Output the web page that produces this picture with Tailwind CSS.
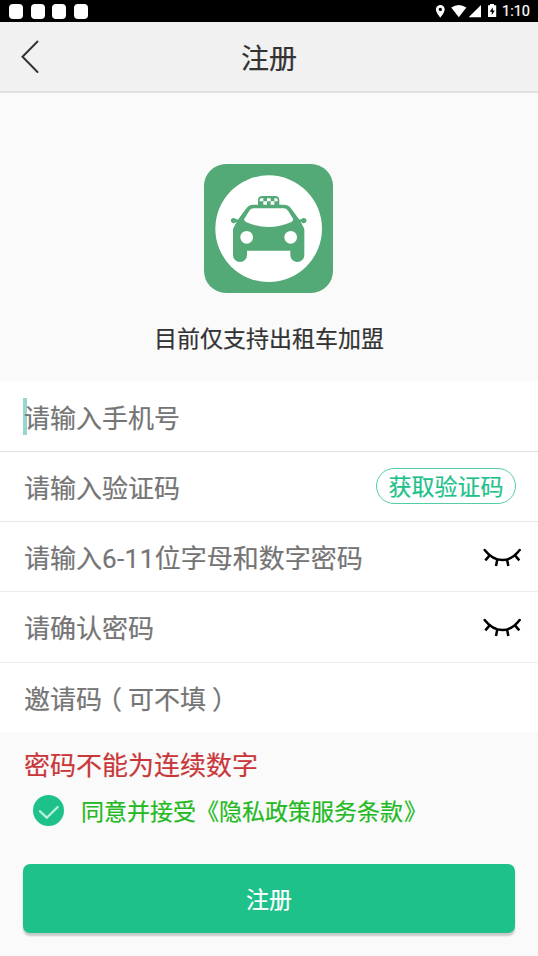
<!DOCTYPE html>
<html lang="zh-CN">
<head>
<meta charset="utf-8">
<title>注册</title>
<script src="https://cdn.jsdelivr.net/npm/@tailwindcss/browser@4"></script>
</head>
<body class="w-[538px] h-[956px] overflow-hidden flex flex-col bg-[#fafafa] font-[Roboto,'Noto_Sans_CJK_SC',sans-serif] text-[23px] text-[#333] [-webkit-text-stroke:0.2px]">
  <div class="h-[22px] shrink-0 bg-black flex items-center justify-between pl-[9px] pr-2">
    <div class="flex gap-[7.5px]">
      <i class="w-[14px] h-[15px] rounded-[4px] bg-white"></i>
      <i class="w-[14px] h-[15px] rounded-[4px] bg-white"></i>
      <i class="w-[14px] h-[15px] rounded-[4px] bg-white"></i>
      <i class="w-[14px] h-[15px] rounded-[4px] bg-white"></i>
    </div>
    <div class="flex items-center text-white">
      <svg class="w-[62px] h-[22px] overflow-visible" viewBox="1 0 62 22" fill="#fff">
        <path fill-rule="evenodd" d="M4.3 5a4.4 4.4 0 0 0-4.4 4.4c0 3.1 4.4 8.1 4.4 8.1s4.4-5 4.4-8.1A4.4 4.4 0 0 0 4.3 5zm0 2.7a1.7 1.7 0 1 1 0 3.4 1.7 1.7 0 0 1 0-3.4z"/>
        <path d="M15.2 7.6Q22.8 2.4 30.4 7.6L22.8 17.2z"/>
        <path d="M45 5v12.3H32.7z"/>
        <path fill-rule="evenodd" d="M52 5.3h2V4h4v1.3h2.2v11.6H52zM56.8 7.2l-3 4.5h2v3.2l3-4.5h-2z"/>
      </svg>
      <span class="text-[14.5px] leading-[22px] ml-[3px] relative top-px">1:10</span>
    </div>
  </div>
  <header class="h-[71px] shrink-0 bg-[#f1f1f1] border-b-2 border-[#e1e1e1] grid grid-cols-[60px_1fr_60px] items-center">
    <svg class="w-5 h-9 ml-[20px]" viewBox="0 0 20 36" fill="none" stroke="#333" stroke-width="2" stroke-linecap="round"><path d="M17.5 2.5L2.5 17.7L17.5 33"/></svg>
    <h1 class="text-center text-[28px] leading-[40px] pt-[6px]">注册</h1>
  </header>
  <section class="h-[288px] shrink-0 pt-[71px] flex flex-col items-center">
    <svg class="w-[129px] h-[129px] shrink-0 mr-px" viewBox="42 42 387 387">
      <rect x="42" y="42" width="387" height="387" rx="66" fill="#53aa77"/>
      <circle cx="236" cy="236" r="160" fill="#fff"/>
      <g fill="#53aa77">
        <path d="M204 164V151Q204 138 217 138H255Q268 138 268 151V164H282Q296 164 304 176L331 213 343 237V315A21 21 0 0 1 301 315V302H171V315A21 21 0 0 1 129 315V237L141 213 168 176Q176 164 190 164z"/>
        <path d="M146 218L138 215A8 8 0 1 1 137 207L150 211zM326 218L334 215A8 8 0 1 0 335 207L322 211z"/>
      </g>
      <g fill="#fff">
        <path d="M191 175H281Q289 175 294 182L309 206Q311 212 304 216Q270 231 236 231Q202 231 168 216Q161 212 163 206L178 182Q183 175 191 175z"/>
        <circle cx="170" cy="262" r="19"/><circle cx="302" cy="262" r="19"/>
        <path d="M209 154V150Q209 145 214 145H220V154zM231 145H242V154H231zM253 145H258Q263 145 263 150V154H253zM220 154H231V164H220zM242 154H253V164H242z"/>
      </g>
    </svg>
    <p class="mt-[30px] leading-[34px]">目前仅支持出租车加盟</p>
  </section>
  <form class="h-[351px] shrink-0 bg-white grid grid-rows-[71px_70px_70px_71px_69px] text-[26px] text-[#757575] leading-[38px]">
    <div class="border-b border-[#e2e2e2] px-6 flex items-center relative"><i class="absolute left-[23px] top-[17px] w-1 h-[37px] bg-[#97d5cf]"></i><span class="relative pt-[5px]">请输入手机号</span></div>
    <div class="border-b border-[#e6e6e6] pl-6 pr-[22px] flex items-center justify-between"><span class="pt-1">请输入验证码</span><button type="button" class="w-[140px] h-[36px] mb-px rounded-full border border-[#55cda6] text-[#1fc18b] text-[23px] leading-[34px] pt-[2px]">获取验证码</button></div>
    <div class="border-b border-[#ececec] pl-6 pr-4 flex items-center justify-between"><span class="pt-1">请输入<span class="tracking-[0.4px]">6-11</span>位字母和数字密码</span>
      <svg class="w-[39px] h-[19px] mt-px" viewBox="369 294 117 57" fill="none" stroke="#000" stroke-width="7.5" stroke-linecap="round"><path d="M374 300Q397 330 427 330Q456 330 479 300"/><path stroke-linecap="butt" d="M389 316L376 331M412 328L408 348M441 328L445 348M465 316L478 331"/></svg></div>
    <div class="border-b border-[#ececec] pl-6 pr-4 flex items-center justify-between"><span class="pt-1">请确认密码</span>
      <svg class="w-[39px] h-[19px] mt-px" viewBox="369 294 117 57" fill="none" stroke="#000" stroke-width="7.5" stroke-linecap="round"><path d="M374 300Q397 330 427 330Q456 330 479 300"/><path stroke-linecap="butt" d="M389 316L376 331M412 328L408 348M441 328L445 348M465 316L478 331"/></svg></div>
    <div class="px-6 pt-1 flex items-center"><span>邀请码</span><span class="[font-feature-settings:'halt'] ml-[7px] mr-[6px]">（</span><span>可不填</span><span class="[font-feature-settings:'halt'] ml-[6px]">）</span></div>
  </form>
  <p class="pl-6 pt-[15px] text-[26px] leading-[38px] text-[#c8383b]">密码不能为连续数字</p>
  <div class="flex items-center pl-[33px] mt-[8px] h-[36px] text-[#22b922]">
    <svg class="w-[31px] h-[31px] relative -top-px" viewBox="0 0 31 31"><circle cx="15.5" cy="15.5" r="15.5" fill="#1fc18b"/><path d="M7 16.3L13.8 22.7L24.7 12" fill="none" stroke="#b9f1dc" stroke-width="2.3" stroke-linecap="round"/></svg>
    <span class="ml-[17px] leading-[34px] pt-1">同意并接受《隐私政策服务条款<span class="[font-feature-settings:'halt'] ml-px">》</span></span>
  </div>
  <button class="mx-[23px] mt-[35px] h-[69px] shrink-0 rounded-[7px] bg-[#1fc18b] text-white shadow-[0_3px_2px_rgba(0,0,0,0.2)] pt-[6px]">注册</button>
</body>
</html>
